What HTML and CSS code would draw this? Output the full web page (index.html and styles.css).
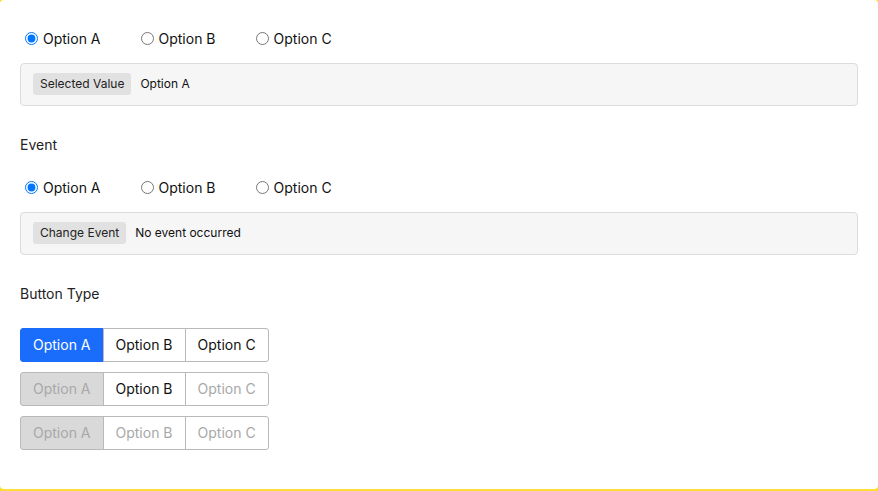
FILE: index.html
```html
<!DOCTYPE html>
<html>
<head>
<meta charset="utf-8">
<link rel="stylesheet" href="styles.css">
</head>
<body>
<div class="card">
  <div class="radio-row">
    <label class="radio"><input type="radio" name="g1" checked><span>Option A</span></label>
    <label class="radio"><input type="radio" name="g1"><span>Option B</span></label>
    <label class="radio"><input type="radio" name="g1"><span>Option C</span></label>
  </div>
  <div class="panel"><span class="tag">Selected Value</span><span class="val">Option A</span></div>

  <div class="section-title">Event</div>
  <div class="radio-row">
    <label class="radio"><input type="radio" name="g2" checked><span>Option A</span></label>
    <label class="radio"><input type="radio" name="g2"><span>Option B</span></label>
    <label class="radio"><input type="radio" name="g2"><span>Option C</span></label>
  </div>
  <div class="panel"><span class="tag">Change Event</span><span class="val">No event occurred</span></div>

  <div class="section-title">Button Type</div>
  <div class="groups">
    <div class="btn-group">
      <span class="seg active">Option A</span>
      <span class="seg">Option B</span>
      <span class="seg">Option C</span>
    </div>
    <div class="btn-group">
      <span class="seg dis-active">Option A</span>
      <span class="seg">Option B</span>
      <span class="seg dis">Option C</span>
    </div>
    <div class="btn-group">
      <span class="seg dis-active">Option A</span>
      <span class="seg dis">Option B</span>
      <span class="seg dis">Option C</span>
    </div>
  </div>
</div>
</body>
</html>
```
FILE: styles.css
```css
html, body {
  margin: 0;
  padding: 0;
  background: #ffdf35;
}
body {
  font-family: Inter, Roboto, "Liberation Sans", sans-serif;
  font-size: 14px;
  color: #1a1a1a;
}
.card {
  background: #fff;
  height: 489px;
  box-sizing: border-box;
  border-radius: 4px;
  padding: 28px 20px 0 20px;
}
.radio-row {
  display: flex;
  gap: 35px;
  height: 20px;
  align-items: center;
}
.radio {
  display: inline-flex;
  align-items: center;
  font-size: 14px;
  color: #111;
}
.radio input {
  margin: 0 5px 0 5px;
  width: 13px;
  height: 13px;
}
.panel {
  margin-top: 15px;
  display: flex;
  align-items: center;
  gap: 9px;
  background: #f6f6f6;
  border: 1px solid #dcdcdc;
  border-radius: 4px;
  padding: 9px 12px 10px 12px;
  font-size: 12px;
  line-height: 16px;
  color: #111;
}
.tag {
  background: #e1e1e1;
  border-radius: 3px;
  height: 22px;
  line-height: 22px;
  padding: 0 7px;
  color: #222;
}
.section-title {
  margin-top: 29px;
  line-height: 20px;
  height: 20px;
  font-size: 14px;
  color: #222;
  margin-bottom: 22px;
}
.groups {
  margin-top: 24px;
  display: flex;
  flex-direction: column;
  align-items: flex-start;
  gap: 10px;
}
.btn-group {
  display: flex;
}
.seg {
  display: block;
  height: 32px;
  line-height: 32px;
  padding: 0 12px;
  border: 1px solid #b9b9b9;
  margin-left: -1px;
  background: #fff;
  color: #111;
}
.seg:first-child {
  margin-left: 0;
  border-radius: 3px 0 0 3px;
}
.seg:last-child {
  border-radius: 0 3px 3px 0;
}
.seg.active {
  background: #1a6dfb;
  border-color: #1a6dfb;
  color: #fff;
}
.seg.dis-active {
  background: #d9d9d9;
  color: #a8a8a8;
}
.seg.dis {
  color: #a8a8a8;
}
```
